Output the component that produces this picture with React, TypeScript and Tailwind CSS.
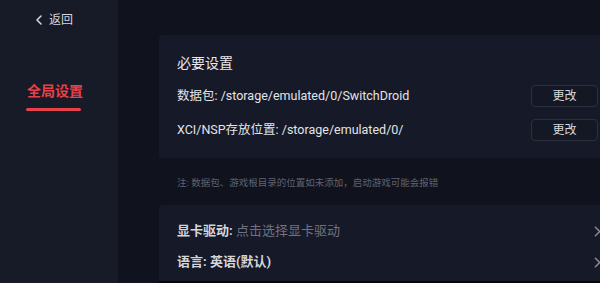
import { ChevronLeft, ChevronRight } from "lucide-react";

const font = {
  fontFamily: 'Roboto, "Noto Sans CJK SC", sans-serif',
};

function ChangeButton() {
  return (
    <button className="w-[67px] h-[22px] rounded-[4px] border border-[#2c2f3d] bg-[#141724] text-[12px] text-[#d8d9de] flex items-center justify-center">
      更改
    </button>
  );
}

function PathRow({ label, value }: { label: string; value: string }) {
  return (
    <div className="flex items-center justify-between h-[22px]">
      <span className="text-[12.5px] text-[#e3e4e8]">
        {label}: {value}
      </span>
      <ChangeButton />
    </div>
  );
}

function NavRow({ label, value, muted }: { label: string; value: string; muted?: boolean }) {
  return (
    <div className="flex items-center justify-between h-[20px]">
      <span className="text-[13px]">
        <span className="font-bold text-[#d4d5db]">{label}: </span>
        <span className={muted ? "text-[#6f7280]" : "font-bold text-[#d4d5db]"}>{value}</span>
      </span>
      <ChevronRight size={17} strokeWidth={2} className="text-[#8a8c96] -mr-[6px]" />
    </div>
  );
}

export default function App() {
  return (
    <div className="w-[600px] h-[283px] flex overflow-hidden bg-[#10131d]" style={font}>
      <aside className="w-[118px] shrink-0 bg-[#171a27] flex flex-col">
        <div className="flex items-center gap-[2px] pl-[31px] pt-[11px] text-[12px] text-[#d6d7dc]">
          <ChevronLeft size={16} strokeWidth={2.4} />
          <span>返回</span>
        </div>
        <div className="pl-[26px] pt-[52px]">
          <div className="text-[14px] font-bold text-[#e8414b] leading-[20px] pl-[1px]">全局设置</div>
          <div className="mt-[7px] w-[55px] h-[3px] rounded-full bg-[#e8414b]" />
        </div>
      </aside>

      <main className="flex-1 pl-[41px] pt-[35px] flex flex-col">
        <section className="bg-[#161927] rounded-tl-[4px] pl-[18px] pr-[2px] pt-[16px] pb-[16px] h-[123px]">
          <div className="text-[14px] text-[#e8e9ec] leading-[24px]">必要设置</div>
          <div className="mt-[10px] flex flex-col gap-[12px]">
            <PathRow label="数据包" value="/storage/emulated/0/SwitchDroid" />
            <PathRow label="XCI/NSP存放位置" value="/storage/emulated/0/" />
          </div>
        </section>

        <div className="pl-[18px] h-[47px] flex items-center pt-[3px] text-[9.5px] text-[#5f6270]">
          注: 数据包、游戏根目录的位置如未添加，启动游戏可能会报错
        </div>

        <section className="flex-1 bg-[#161927] rounded-tl-[4px] pl-[18px] pr-0 pt-[16px] flex flex-col gap-[11px]">
          <NavRow label="显卡驱动" value="点击选择显卡驱动" muted />
          <NavRow label="语言" value="英语(默认)" />
        </section>
        <div className="h-[2px] bg-[#06070b]" />
      </main>
    </div>
  );
}
